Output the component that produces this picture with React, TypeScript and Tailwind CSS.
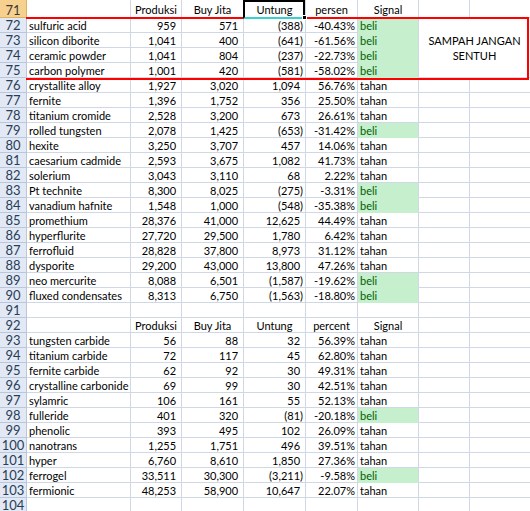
import React from 'react';

type Row = {
  num: number;
  name?: string;
  prod?: number;
  buy?: number;
  untung?: number;
  pct?: number;
  header?: string;
};

const rows: Row[] = [
  { num: 71, header: 'persen' },
  { num: 72, name: 'sulfuric acid', prod: 959, buy: 571, untung: -388, pct: -40.43 },
  { num: 73, name: 'silicon diborite', prod: 1041, buy: 400, untung: -641, pct: -61.56 },
  { num: 74, name: 'ceramic powder', prod: 1041, buy: 804, untung: -237, pct: -22.73 },
  { num: 75, name: 'carbon polymer', prod: 1001, buy: 420, untung: -581, pct: -58.02 },
  { num: 76, name: 'crystallite alloy', prod: 1927, buy: 3020, untung: 1094, pct: 56.76 },
  { num: 77, name: 'fernite', prod: 1396, buy: 1752, untung: 356, pct: 25.5 },
  { num: 78, name: 'titanium cromide', prod: 2528, buy: 3200, untung: 673, pct: 26.61 },
  { num: 79, name: 'rolled tungsten', prod: 2078, buy: 1425, untung: -653, pct: -31.42 },
  { num: 80, name: 'hexite', prod: 3250, buy: 3707, untung: 457, pct: 14.06 },
  { num: 81, name: 'caesarium cadmide', prod: 2593, buy: 3675, untung: 1082, pct: 41.73 },
  { num: 82, name: 'solerium', prod: 3043, buy: 3110, untung: 68, pct: 2.22 },
  { num: 83, name: 'Pt technite', prod: 8300, buy: 8025, untung: -275, pct: -3.31 },
  { num: 84, name: 'vanadium hafnite', prod: 1548, buy: 1000, untung: -548, pct: -35.38 },
  { num: 85, name: 'promethium', prod: 28376, buy: 41000, untung: 12625, pct: 44.49 },
  { num: 86, name: 'hyperflurite', prod: 27720, buy: 29500, untung: 1780, pct: 6.42 },
  { num: 87, name: 'ferrofluid', prod: 28828, buy: 37800, untung: 8973, pct: 31.12 },
  { num: 88, name: 'dysporite', prod: 29200, buy: 43000, untung: 13800, pct: 47.26 },
  { num: 89, name: 'neo mercurite', prod: 8088, buy: 6501, untung: -1587, pct: -19.62 },
  { num: 90, name: 'fluxed condensates', prod: 8313, buy: 6750, untung: -1563, pct: -18.8 },
  { num: 91 },
  { num: 92, header: 'percent' },
  { num: 93, name: 'tungsten carbide', prod: 56, buy: 88, untung: 32, pct: 56.39 },
  { num: 94, name: 'titanium carbide', prod: 72, buy: 117, untung: 45, pct: 62.8 },
  { num: 95, name: 'fernite carbide', prod: 62, buy: 92, untung: 30, pct: 49.31 },
  { num: 96, name: 'crystalline carbonide', prod: 69, buy: 99, untung: 30, pct: 42.51 },
  { num: 97, name: 'sylamric', prod: 106, buy: 161, untung: 55, pct: 52.13 },
  { num: 98, name: 'fulleride', prod: 401, buy: 320, untung: -81, pct: -20.18 },
  { num: 99, name: 'phenolic', prod: 393, buy: 495, untung: 102, pct: 26.09 },
  { num: 100, name: 'nanotrans', prod: 1255, buy: 1751, untung: 496, pct: 39.51 },
  { num: 101, name: 'hyper', prod: 6760, buy: 8610, untung: 1850, pct: 27.36 },
  { num: 102, name: 'ferrogel', prod: 33511, buy: 30300, untung: -3211, pct: -9.58 },
  { num: 103, name: 'fermionic', prod: 48253, buy: 58900, untung: 10647, pct: 22.07 },
  { num: 104 },
];

// accounting style: negatives in brackets, positives keep room for ")"
function Acct({ value }: { value?: number }) {
  if (value === undefined) return null;
  const txt = Math.abs(value).toLocaleString('en-US');
  if (value < 0) return <>({txt})</>;
  return (
    <>
      {txt}
      <span className="invisible">)</span>
    </>
  );
}

const cell = 'border-r border-b border-[#d0d7e5] whitespace-nowrap overflow-hidden';

export default function App() {
  return (
    <div className="relative w-[530px] h-[511px] overflow-hidden bg-white font-[Lato,sans-serif] text-[11px] text-black">
      <div className="grid grid-cols-[27px_104px_51px_62px_62px_52px_61px_51px_61px]">
        {rows.map((r) => {
          const h = r.num === 71 ? 'h-[18px] leading-[18px] pt-[1px]' : 'h-[15px] leading-[15px]';
          const beli = r.untung !== undefined && r.untung < 0;
          const signal = r.untung === undefined ? '' : beli ? 'beli' : 'tahan';
          return (
            <React.Fragment key={r.num}>
              <div
                className={`${h} border-r border-b text-center text-[13px] overflow-hidden ${
                  r.num === 71
                    ? 'bg-[#f6d08f] border-[#e1b25c] text-[#3a3a3a]'
                    : 'bg-[#e2e9f4] border-[#b8c7dc] text-[#283d58]'
                }`}
              >
                {r.num}
              </div>
              <div className={`${cell} ${h} pl-[2px]`}>{r.name}</div>
              {r.header ? (
                <>
                  <div className={`${cell} ${h} text-center`}>Produksi</div>
                  <div className={`${cell} ${h} text-center`}>Buy Jita</div>
                  <div className={`${cell} ${h} text-center`}>Untung</div>
                  <div className={`${cell} ${h} text-center`}>{r.header}</div>
                  <div className={`${cell} ${h} text-center`}>Signal</div>
                </>
              ) : (
                <>
                  <div className={`${cell} ${h} text-right pr-[2px]`}>
                    <Acct value={r.prod} />
                  </div>
                  <div className={`${cell} ${h} text-right pr-[2px]`}>
                    <Acct value={r.buy} />
                  </div>
                  <div className={`${cell} ${h} text-right pr-[2px]`}>
                    <Acct value={r.untung} />
                  </div>
                  <div className={`${cell} ${h} text-right pr-[2px]`}>
                    {r.pct !== undefined ? `${r.pct.toFixed(2)}%` : ''}
                  </div>
                  <div
                    className={`${h} border-r border-b whitespace-nowrap pl-[2px] ${
                      beli ? 'bg-[#c6efce] border-b-[#c6efce] border-r-[#d0d7e5] text-[#006100]' : 'border-[#d0d7e5]'
                    }`}
                  >
                    {signal}
                  </div>
                </>
              )}
              {r.num === 72 ? (
                <div className={`${cell} col-span-2 row-span-4 flex items-center justify-center text-center leading-[15px] pt-[1px]`}>
                  SAMPAH JANGAN
                  <br />
                  SENTUH
                </div>
              ) : r.num >= 73 && r.num <= 75 ? null : (
                <>
                  <div className={`${cell} ${h}`} />
                  <div className={`${cell} ${h}`} />
                </>
              )}
            </React.Fragment>
          );
        })}
      </div>

      {/* red outline round the "sampah" block */}
      <div className="absolute left-[26px] top-[17px] w-[503px] h-[63px] border-2 border-l-0 border-[#ff0000] pointer-events-none" />

      {/* active cell D71 */}
      <div className="absolute left-[243px] top-0 w-[62px] h-[19px] border-2 border-black border-b-[#39d0d0] pointer-events-none" />
      <div className="absolute left-[302px] top-[15px] w-[5px] h-[5px] bg-black border border-white pointer-events-none" />
    </div>
  );
}
